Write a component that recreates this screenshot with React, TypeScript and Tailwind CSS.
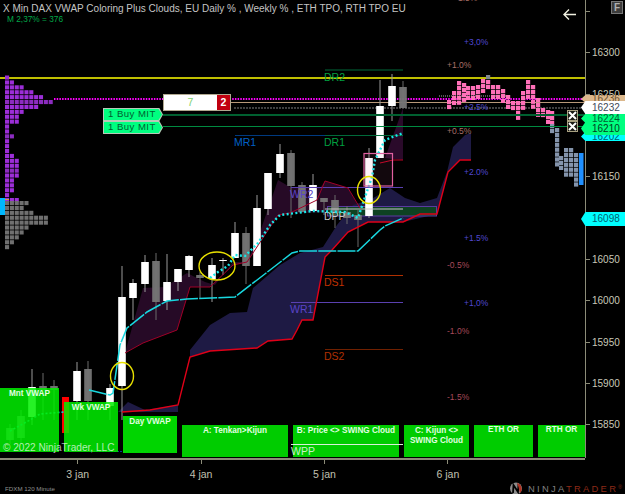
import React from 'react';

// [x, bodyTop, bodyBottom, wickTop, wickBottom, color]
const W = '#ffffff';
const G = '#767676';
const candles: [number, number, number, number, number, string][] = [
  [10, 428, 440, 424, 444, '#7a7a7a'],
  [21, 416, 438, 410, 444, '#7a7a7a'],
  [32, 387, 417, 369, 425, W],
  [43, 386, 390, 373, 420, G],
  [54, 386, 390, 380, 420, G],
  [77, 371, 401, 362, 420, W],
  [88, 369, 401, 361, 420, G],
  [110, 388, 406, 384, 420, W],
  [122, 297, 386, 266, 420, W],
  [133, 283, 298, 279, 320, W],
  [145, 262, 284, 255, 292, W],
  [156, 261, 302, 253, 320, G],
  [167, 282, 301, 254, 310, W],
  [178, 269, 282, 269, 291, W],
  [189, 256, 270, 255, 277, W],
  [200, 275, 278, 272, 298, G],
  [212, 265, 279, 258, 302, W],
  [223, 260, 261, 258, 275, W],
  [235, 233, 258, 222, 258, W],
  [246, 233, 266, 227, 284, G],
  [257, 208, 266, 195, 266, W],
  [268, 173, 209, 173, 215, W],
  [280, 154, 173, 144, 178, W],
  [291, 153, 186, 150, 218, G],
  [302, 185, 212, 182, 212, G],
  [313, 185, 211, 174, 211, W],
  [324, 198, 202, 198, 215, G],
  [335, 200, 213, 195, 228, G],
  [347, 212, 218, 206, 224, G],
  [358, 215, 220, 210, 247, G],
  [369, 158, 216, 148, 218, W],
  [380, 106, 158, 80, 158, W],
  [392, 86, 106, 74, 121, W],
  [403, 87, 108, 81, 108, G],
];

const leftTpo = [1, 2, 4, 6, 8, 10, 7, 4, 3, 3, 1, 1, 2, 1, 1, 1, 2, 3, 3, 3, 3, 2, 2, 2, 1, 3];
const leftTpoGray = [5, 4, 6, 9, 9, 5, 4, 3, 2, 1];

// [x, top, bottom]
const pinkTpo: [number, number, number][] = [
  [447, 100, 109], [452, 91, 108], [457, 81, 105], [462, 83, 103], [466, 86, 100], [471, 86, 100],
  [476, 85, 100], [481, 79, 95], [486, 80, 91], [491, 85, 100], [496, 85, 100], [501, 89, 103],
  [506, 95, 108], [511, 101, 110], [516, 101, 122], [521, 91, 110], [526, 80, 98], [531, 85, 108],
  [536, 98, 118], [541, 108, 119], [546, 110, 123], [550, 111, 124],
];
const slateTpo: [number, number, number][] = [
  [550, 124, 133], [555, 128, 168], [559, 156, 169], [564, 148, 178], [569, 148, 178], [574, 153, 185],
];

const levels: [string, number, number, number, string, string][] = [
  ['DR2', 325, 403, 70, '#006a3a', '#00a040'],
  ['MR1', 235, 325, 135.5, '#003a80', '#0060c8'],
  ['DR1', 325, 403, 135.5, '#006a3a', '#00a040'],
  ['WR2', 291, 403, 187.5, '#5a40b0', '#5a44c8'],
  ['DPP', 325, 403, 209, '#c8c8c8', '#c8c8c8'],
  ['DS1', 325, 403, 275.5, '#b03000', '#c03000'],
  ['WR1', 291, 403, 302.5, '#5a40b0', '#5a44c8'],
  ['DS2', 325, 403, 349.5, '#702000', '#b03000'],
];

const pct: [string, number, number, string][] = [
  ['+1.5%', 453, 1, '#a06a60'],
  ['+3,0%', 464, 45, '#5048d0'],
  ['+1.0%', 447, 68, '#a87068'],
  ['+2.5%', 464, 110, '#5048d0'],
  ['+0.5%', 447, 134, '#a87068'],
  ['+2.0%', 464, 175, '#5048d0'],
  ['+1.5%', 464, 241, '#5048d0'],
  ['-0.5%', 447, 268, '#a84a5a'],
  ['+1,0%', 464, 306, '#5048d0'],
  ['-1.0%', 447, 334, '#a84a5a'],
  ['-1.5%', 447, 400, '#a84a5a'],
];

// 16200 and 16100 sit behind the live price flags
const prices = ['16300', '16250', '', '16150', '', '16050', '16000', '15950', '15900', '15850'];

const ChartDrawing = () => (
  <svg className="absolute inset-0" width="585" height="458" viewBox="0 0 585 458">
    {/* clouds */}
    <polygon
      points="125,353 143,288 165,287 187,273 205,282 215,285 233,262 247,262 260,232 278,180 290,187 320,188 325,181 348,188 360,208 345,212 290,213 278,215 253,253 247,262 233,265 210,287 190,287 177,330 143,343"
      fill="#260a26"
    />
    <polygon points="385,158 403,108 403,160" fill="#2a0a2a" />
    <polygon
      points="190,350 210,325 230,313 247,312 253,288 280,265 300,253 323,247 337,225 353,205 370,200 390,188 405,198 420,203 437,198 447,172 453,147 465,135 471,133 471,160 460,160 448,172 437,214 403,222 368,222 348,232 332,250 325,257 313,320 302,320 297,330 292,339 268,341 257,348 210,351 190,357"
      fill="#1e1a44"
    />
    <polygon points="118,412 128,402 145,410 178,405 178,412" fill="#1e1a44" />
    <rect x="327.5" y="206.5" width="109" height="9.5" fill="#0c4a1c" fillOpacity="0.85" stroke="#5a3aa0" />

    {/* price lines */}
    <line x1="0" x2="585" y1="78" y2="78" stroke="#ffff00" strokeWidth="1.4" />
    <line x1="54" x2="585" y1="99" y2="99" stroke="#ff00ff" strokeWidth="2" strokeDasharray="1.5 1.2" />
    <line x1="230" x2="585" y1="102.5" y2="102.5" stroke="#b89878" />
    <line x1="234" x2="585" y1="108" y2="108" stroke="#555555" strokeWidth="1.4" strokeDasharray="2 1" />
    <line x1="439" x2="508" y1="96" y2="96" stroke="#aaaaaa" strokeDasharray="1 1" />

    {/* percent marks */}
    {pct.map(([t, x, y, c]) => (
      <text key={t + y} x={x} y={y} fill={c} fontSize="8.5">{t}</text>
    ))}

    {/* left profile */}
    {leftTpo.map((n, r) =>
      Array.from({ length: n }).map((_, c) => (
        <rect key={`p${r}-${c}`} x={5 + c * 4.85} y={75.5 + r * 4.9} width="4.1" height="4.1" fill={r % 7 === 5 ? '#8c2cc0' : '#9c2ed8'} />
      )),
    )}
    {leftTpoGray.map((n, r) =>
      Array.from({ length: n }).map((_, c) => (
        <rect key={`g${r}-${c}`} x={5 + c * 4.85} y={201 + r * 4.9} width="4.1" height="4.1" fill="#707070" />
      )),
    )}
    <rect x="0" y="198" width="5" height="17" fill="#00b8ff" />
    <rect x="5" y="199" width="4" height="1" fill="#d0a040" />

    {/* right profile */}
    {pinkTpo.map(([x, a, b]) =>
      Array.from({ length: Math.round((b - a) / 4.9) }).map((_, i) => (
        <rect key={`k${x}-${i}`} x={x} y={a + i * 4.9} width="4.2" height="4.2" fill="#ff70b8" />
      )),
    )}
    <rect x="486" y="75" width="4.2" height="4.2" fill="#808890" />
    {slateTpo.map(([x, a, b]) =>
      Array.from({ length: Math.round((b - a) / 4.9) }).map((_, i) => (
        <rect key={`s${x}-${i}`} x={x} y={a + i * 4.9} width="4.2" height="4.2" fill="#8494ac" />
      )),
    )}
    <rect x="579" y="153" width="4.5" height="32" fill="#2090ff" />

    {/* candles */}
    <rect x="62" y="397" width="7" height="36" fill="#ff0000" />
    {candles.map(([x, t, b, wt, wb, c]) => (
      <g key={x}>
        <line x1={x} x2={x} y1={wt} y2={wb} stroke={c === W ? '#9a9a9a' : '#6a6a6a'} />
        <rect x={x - 3.8} y={t} width="7.6" height={b - t} fill={c} fillOpacity={c === W ? 1 : 0.95} />
      </g>
    ))}

    {/* levels */}
    {levels.map(([name, x1, x2, y, line, text]) => (
      <g key={name}>
        <line x1={x1} x2={x2} y1={y} y2={y} stroke={line} />
        <text x={x1 - 1} y={y + 10.5} fill={text} fontSize="10.5">{name}</text>
      </g>
    ))}

    {/* swing cloud edges */}
    <polyline
      points="125,353 143,343 177,330 190,287 210,287 233,265 247,262 253,253 278,215 290,213 317,200 325,181 348,188 360,208"
      fill="none"
      stroke="#a00028"
      strokeWidth="1"
    />
    <polyline points="380,163 393,160 403,160" fill="none" stroke="#c00020" />
    <polyline
      points="122,412 150,410 178,405 190,357 210,351 257,348 268,341 292,339 297,330 302,320 313,320 325,257 332,250 348,232 368,222 403,222 420,214 437,214 448,172 455,165 460,160 471,160"
      fill="none"
      stroke="#e00018"
      strokeWidth="1.4"
    />

    {/* kijun and tenkan */}
    <polyline
      points="89,390 110,395 113,393 120,345 127,328 147,312 167,301 187,299 235,297 292,253 300,251 358,251 380,230 385,226 403,218"
      fill="none"
      stroke="#18d8e0"
      strokeWidth="1.5"
      strokeDasharray="18 1.2"
    />
    <polyline points="10,431 30,420 40,414 64,412" fill="none" stroke="#18d8e0" strokeWidth="1.6" strokeDasharray="2 2" />
    <polyline
      points="210,278 218,272 228,266 235,255 245,256 258,243 270,225 280,215 313,211 345,212 358,218 364,200 372,177 375,160 385,140 403,133"
      fill="none"
      stroke="#18e8e8"
      strokeWidth="2.4"
      strokeDasharray="2 2.4"
    />

    {/* magenta box and circles */}
    <rect x="364" y="153.5" width="28.5" height="32.5" fill="#e060a0" fillOpacity="0.08" stroke="#e060a0" strokeWidth="1.2" />
    <ellipse cx="122" cy="376" rx="11.5" ry="13.5" fill="none" stroke="#e8e000" strokeWidth="1.4" />
    <ellipse cx="217" cy="266" rx="18" ry="14" fill="none" stroke="#e8e000" strokeWidth="1.4" />
    <ellipse cx="369" cy="190" rx="11.5" ry="13.5" fill="none" stroke="#e8e000" strokeWidth="1.4" />

    {/* order lines */}
    <line x1="163" x2="585" y1="115" y2="115" stroke="#006030" strokeWidth="2" />
    <line x1="163" x2="585" y1="126.5" y2="126.5" stroke="#008a40" />
    <line x1="93" x2="148" y1="451.5" y2="451.5" stroke="#0a3a8a" strokeDasharray="2 1" />
  </svg>
);

const BuyFlag = () => (
  <div className="h-[13px] w-[60px] bg-[#b8c8b8] [clip-path:polygon(0_0,94%_0,100%_50%,94%_100%,0_100%)] p-px">
    <div className="flex h-full items-center bg-[#00ff80] pl-[4px] text-[9.6px] tracking-[0.45px] whitespace-nowrap text-[#006030] [clip-path:polygon(0_0,94%_0,100%_50%,94%_100%,0_100%)]">
      1 Buy MIT
    </div>
  </div>
);

const PriceFlag = ({ label, cls, h }: { label: string; cls: string; h: string }) => (
  <div className={`flex w-[44px] items-center pl-[11px] text-[10px] leading-none [clip-path:polygon(0_50%,10%_0,100%_0,100%_100%,10%_100%)] ${cls} ${h}`}>
    {label}
  </div>
);

const CloseBox = () => (
  <div className="flex h-[11px] w-[11px] items-center justify-center border border-[#a8a080] bg-[#1a1a14]">
    <svg width="9" height="9" viewBox="0 0 9 9">
      <path d="M1 1 L8 8 M8 1 L1 8" stroke="#ffffff" strokeWidth="2" />
    </svg>
  </div>
);

const SignalBox = ({ cls, label }: { cls: string; label: React.ReactNode }) => (
  <div className={`shrink-0 text-center text-[8.2px] leading-[10px] font-bold whitespace-nowrap text-[#e0ffe0] ${cls}`}>{label}</div>
);

export default function App() {
  return (
    <div className="flex h-[494px] w-[625px] flex-col overflow-hidden bg-black font-['Liberation_Sans',Arial,sans-serif]">
      <div className="flex h-[458px]">
        {/* plot */}
        <div className="relative w-[585px] shrink-0">
          <ChartDrawing />

          <div className="absolute top-[2px] left-[3px] text-[10px] leading-[14px] whitespace-nowrap text-[#c4c4c4]">
            X Min DAX VWAP Coloring Plus Clouds, EU Daily % , Weekly % , ETH TPO, RTH TPO EU
          </div>
          <div className="absolute top-[14px] left-[7px] text-[8.3px] leading-[11px] text-[#00a848]">M 2,37% = 376</div>

          <svg className="absolute top-[8px] left-[562px]" width="15" height="13" viewBox="0 0 15 13">
            <path d="M14 6.5 H2 M7 1.5 L2 6.5 L7 11.5" fill="none" stroke="#f0f0e0" strokeWidth="1.4" />
          </svg>

          {/* order ticket */}
          <div className="absolute top-[94px] left-[163px] flex h-[17px] w-[68px] border border-[#b0a890] bg-white">
            <div className="flex-1 text-center text-[10.5px] leading-[15px] text-[#80d070]">7</div>
            <div className="w-[13px] bg-[#c00010] text-center text-[10.5px] leading-[15px] font-bold text-white">2</div>
          </div>

          <div className="absolute top-[108px] left-[103px] flex flex-col">
            <BuyFlag />
            <BuyFlag />
          </div>

          <div className="absolute top-[110px] left-[567px] flex flex-col">
            <CloseBox />
            <CloseBox />
          </div>

          {/* signal boxes */}
          <div className="absolute bottom-px left-0 flex items-end gap-[5px]">
            <SignalBox cls="mb-[5px] h-[64px] w-[59px] bg-[#00f000]/85 pt-[1px]" label="Mnt VWAP" />
            <SignalBox cls="mb-[5px] h-[50px] w-[54px] bg-[#00f000]/85 pt-[1px]" label="Wk VWAP" />
            <SignalBox cls="mb-[4px] h-[37px] w-[54px] bg-[#00e000]/95 pt-[1px]" label="Day VWAP" />
            <SignalBox cls="h-[32px] w-[106px] bg-[#00cc00] pt-[1px]" label="A: Tenkan>Kijun" />
            <SignalBox cls="h-[32px] w-[106px] bg-[#00cc00] pt-[1px]" label="B: Price <> SWING Cloud" />
            <SignalBox cls="h-[32px] w-[65px] bg-[#00cc00] pt-[1px]" label={<>C: Kijun &lt;&gt;<br />SWING Cloud</>} />
            <SignalBox cls="h-[32px] w-[59px] bg-[#00cc00]" label="ETH OR" />
            <SignalBox cls="h-[32px] w-[47px] bg-[#00cc00]" label="RTH OR" />
          </div>

          <div className="absolute top-[443.5px] left-[291px] h-px w-[112px] bg-[#d8f0d8]" />
          <div className="absolute top-[445px] left-[291px] text-[10.5px] leading-[12px] text-[#c8f0c8]">WPP</div>
          <div className="absolute top-[441px] left-[3px] text-[10.1px] leading-[14px] whitespace-nowrap text-white/70">© 2022 NinjaTrader, LLC</div>
        </div>

        {/* price scale */}
        <div className="relative flex-1 border-l border-[#8c8c78]">
          <div className="-mt-[9px] flex h-[41.3px] items-center">
            <div className="h-px w-[4px] bg-[#8c8c78]" />
          </div>
          {prices.map((p, i) => (
            <div key={i} className="flex h-[41.3px] items-center gap-[2px] text-[10px] text-[#c8c8b8]">
              <div className="h-px w-[4px] bg-[#8c8c78]" />
              {p}
            </div>
          ))}
          <div className="absolute top-[1px] right-[2px] flex h-[13px] w-[12px] items-center justify-center border border-[#777] bg-[#3c3c3c] text-[10px] leading-none font-bold text-[#b0b0b0]">
            F
          </div>

          {/* live price flags */}
          <div className="absolute top-[95px] left-[-5px] flex flex-col">
            <PriceFlag label="16236" cls="bg-[#dcb88c] text-[#6a5030]" h="h-[8px]" />
            <PriceFlag label="16232" cls="-mt-[2px] z-10 bg-white text-[#404858]" h="h-[13px]" />
            <PriceFlag label="16224" cls="bg-[#00ff80] text-[#006030]" h="h-[9px]" />
            <PriceFlag label="16210" cls="z-10 -mt-[1px] bg-[#00ff80] text-[#004020]" h="h-[13px]" />
            <PriceFlag label="16202" cls="-mt-[3px] bg-[#00ffff] text-[#006070]" h="h-[9px]" />
          </div>
          <div className="absolute top-[212px] left-[-5px]">
            <PriceFlag label="16098" cls="bg-[#00ffff] text-[#006070]" h="h-[14px]" />
          </div>
        </div>
      </div>

      {/* time scale */}
      <div className="relative w-[585px] flex-1 border-t-2 border-[#8c8c78] text-[10.5px] text-[#c0c0b0]">
        <div className="flex pl-[16px]">
          {['3 jan', '4 jan', '5 jan', '6 jan'].map((d) => (
            <div key={d} className="flex w-[123.4px] flex-col items-center">
              <div className="h-[4px] w-px bg-[#8c8c78]" />
              <div className="mt-[4px] leading-[12px]">{d}</div>
            </div>
          ))}
        </div>
        <div className="absolute top-[24px] left-[5px] text-[6.2px] leading-[10px] text-[#909090]">FDXM 120 Minute</div>
        <div className="absolute top-[22px] left-[509px] flex w-[116px] items-center gap-[5px]">
          <svg width="14" height="13" viewBox="0 0 14 13" className="shrink-0">
            <circle cx="7" cy="6.5" r="6" fill="#8a8a8a" />
            <path d="M4 11 L4.5 3 L9 10 L9.5 2" fill="none" stroke="#000" strokeWidth="1.8" />
            <path d="M8 1 A6 6 0 0 1 11 11 L9.5 5 Z" fill="#b03020" />
          </svg>
          <div className="text-[9.4px] leading-[12px] tracking-[2.3px] whitespace-nowrap text-[#808080]">
            NINJA<span className="text-[#8c2a18]">TRADER<sup className="text-[5px] tracking-normal">®</sup></span>
          </div>
        </div>
      </div>
    </div>
  );
}
